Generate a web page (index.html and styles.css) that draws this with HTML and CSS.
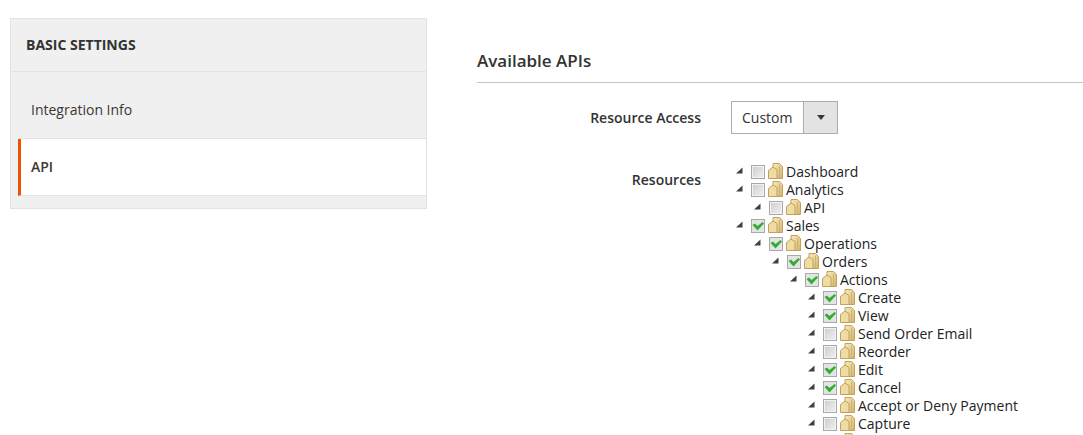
FILE: index.html
```html
<!DOCTYPE html>
<html lang="en">
<head>
<meta charset="UTF-8">
<title>Integration API</title>
<link rel="stylesheet" href="styles.css">
</head>
<body>

<svg class="defs" width="0" height="0">
    <defs>
        <linearGradient id="folderFill" x1="0" y1="0" x2="1" y2="1">
            <stop offset="0" stop-color="#f9ebbb"/>
            <stop offset="1" stop-color="#d5b46c"/>
        </linearGradient>
        <linearGradient id="boxFill" x1="0" y1="0" x2="1" y2="1">
            <stop offset="0" stop-color="#cfcfcf"/>
            <stop offset="1" stop-color="#efefef"/>
        </linearGradient>
        <symbol id="arrow" viewBox="0 0 9 8">
            <polygon points="7.500,0.500 7.500,6.500 1,6.500" fill="#3f3f3f"/>
        </symbol>
        <symbol id="folder" viewBox="0 0 15 16">
            <path d="M5 0.500h6.500l3 3v12h-9.500z" fill="url(#folderFill)" stroke="#bfa160"/>
            <path d="M0.500 7.500l4.500-3.500 4 2.500v9h-8.500z" fill="#efdca3" stroke="#bfa160"/>
            <path d="M11.500 3v12" stroke="#cfb273"/>
        </symbol>
        <symbol id="box" viewBox="0 0 14 14">
            <rect x="0.500" y="0.500" width="13" height="13" fill="#f2f2f2" stroke="#a9a9a9"/>
            <rect x="2" y="2" width="10" height="10" fill="url(#boxFill)"/>
        </symbol>
        <symbol id="checked" viewBox="0 0 14 14">
            <rect x="0.500" y="0.500" width="13" height="13" fill="#e4e4e4" stroke="#a9a9a9"/>
            <path d="M1.500 6l2.500-1.500 2.500 2.500 5-4 1.500 1.500-6.500 7z" fill="#35ad35"/>
        </symbol>
    </defs>
</svg>

<div class="page">
    <div class="sidebar">
        <div class="sidebar-title">BASIC SETTINGS</div>
        <a class="side-link" href="#info">Integration Info</a>
        <a class="side-link active" href="#api">API</a>
    </div>

    <div class="main">
        <h2 class="section-title">Available APIs</h2>

        <div class="field">
            <label class="field-label">Resource Access</label>
            <div class="select-box">
                <span class="select-value">Custom</span>
                <span class="select-btn"><span class="select-caret"></span></span>
            </div>
        </div>

        <div class="field field-tree">
            <label class="field-label">Resources</label>
            <ul class="tree" id="tree"></ul>
        </div>
    </div>
</div>

<script src="tree.js"></script>

</body>
</html>
```

FILE: styles.css
```css
html, body {
    margin: 0;
    height: 435px;
    overflow: hidden;
    background-color: white;
    font-family: "Open Sans", Arial, sans-serif;
    font-size: 14px;
    color: #333;
}

.defs {
    position: absolute;
}

.page {
    display: flex;
    gap: 50px;
    padding: 18px 0 0 10px;
}

/* Sidebar */
.sidebar {
    flex: none;
    width: 417px;
    height: 191px;
    box-sizing: border-box;
    background-color: #f0f0f0;
    border: 1px solid #e3e3e3;
}

.sidebar-title {
    height: 52px;
    line-height: 52px;
    padding-left: 15px;
    font-weight: 700;
    font-size: 14px;
    color: #333;
    border-bottom: 1px solid #e3e3e3;
}

.side-link {
    display: block;
    color: #41362f;
    text-decoration: none;
    margin-left: 7px;
    padding-left: 13px;
    border-bottom: 1px solid #e3e3e3;
}

.side-link:not(.active) {
    height: 66px;
    line-height: 75px;
}

.side-link.active {
    height: 56px;
    line-height: 56px;
    font-weight: 600;
    background-color: white;
    border-left: 3px solid #eb5202;
    padding-left: 10px;
}

/* Main column */
.main {
    flex: 1;
    min-width: 0;
}

.section-title {
    margin: 0;
    padding-top: 31px;
    height: 33px;
    line-height: 24px;
    font-size: 17px;
    font-weight: 600;
    color: #333;
    border-bottom: 1px solid #cac3b4;
}

.field {
    display: flex;
    align-items: center;
    margin-top: 18px;
}

.field-tree {
    align-items: flex-start;
    margin-top: 28px;
}

.field-label {
    flex: none;
    width: 224px;
    text-align: right;
    font-weight: 600;
    color: #333;
}

.field-tree .field-label {
    padding-top: 8px;
}

.select-box {
    display: flex;
    margin-left: 30px;
    width: 107px;
    height: 33px;
    box-sizing: border-box;
    border: 1px solid #adadad;
}

.select-value {
    flex: 1;
    line-height: 31px;
    padding-left: 10px;
    color: #333;
}

.select-btn {
    flex: none;
    width: 33px;
    display: flex;
    align-items: center;
    justify-content: center;
    background-color: #e3e3e3;
    border-left: 1px solid #adadad;
}

.select-caret {
    width: 0;
    height: 0;
    border-left: 4px solid transparent;
    border-right: 4px solid transparent;
    border-top: 5px solid #41362f;
}

/* Resource tree */
.tree {
    list-style: none;
    margin: 0 0 0 34px;
    padding: 0;
    font-size: 14px;
    color: #222;
}

.tree ul {
    list-style: none;
    margin: 0;
    padding: 0 0 0 18px;
}

.tree-row {
    display: flex;
    align-items: center;
    height: 18px;
    white-space: nowrap;
}

.tree-arrow {
    width: 9px;
    height: 8px;
    margin-right: 7px;
}

.tree-box {
    width: 14px;
    height: 14px;
    margin-top: 2px;
    margin-right: 3px;
}

.tree-folder {
    width: 15px;
    height: 16px;
    margin-right: 3px;
}
```

FILE: tree.js
```js
// name, checked, children
var resources = [
    ['Dashboard', false],
    ['Analytics', false, [
        ['API', false]
    ]],
    ['Sales', true, [
        ['Operations', true, [
            ['Orders', true, [
                ['Actions', true, [
                    ['Create', true],
                    ['View', true],
                    ['Send Order Email', false],
                    ['Reorder', false],
                    ['Edit', true],
                    ['Cancel', true],
                    ['Accept or Deny Payment', false],
                    ['Capture', false],
                    ['', false] // next row, only the folder top shows in the window
                ]]
            ]]
        ]]
    ]]
];

function icon(name, cls) {
    return '<svg class="' + cls + '"><use href="#' + name + '"/></svg>';
}

function renderItems(items) {
    var html = '';
    items.forEach(function(item) {
        html += '<li><div class="tree-row">' +
            icon('arrow', 'tree-arrow') +
            icon(item[1] ? 'checked' : 'box', 'tree-box') +
            icon('folder', 'tree-folder') +
            '<span>' + item[0] + '</span></div>';
        if (item[2]) {
            html += '<ul>' + renderItems(item[2]) + '</ul>';
        }
        html += '</li>';
    });
    return html;
}

document.getElementById('tree').innerHTML = renderItems(resources);
```
